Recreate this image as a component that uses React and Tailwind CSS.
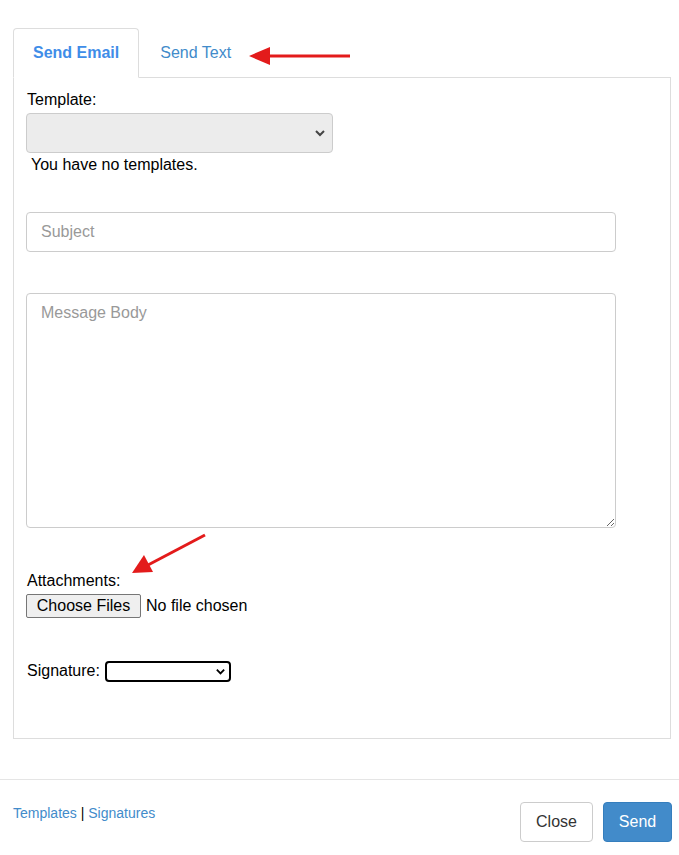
import React from "react";

const Chevron = ({ className }) => (
  <svg viewBox="0 0 12 12" className={className} fill="none" stroke="currentColor" strokeWidth="2">
    <path d="M2 4l4 4 4-4" />
  </svg>
);

const Arrows = () => (
  <svg className="absolute inset-0 pointer-events-none" width="679" height="855">
    <line x1="350" y1="56" x2="266" y2="56" stroke="#e31b1b" strokeWidth="3" />
    <polygon points="249,56 270,47 270,65" fill="#e31b1b" />
    <line x1="205" y1="535" x2="148" y2="565" stroke="#e31b1b" strokeWidth="3" />
    <polygon points="132,573 144,555 153,572" fill="#e31b1b" />
  </svg>
);

const App = () => {
  return (
    <div className="relative w-[679px] h-[855px] bg-white font-['Liberation_Sans',Arial,sans-serif] text-[16px] text-black">
      <Arrows />
      <div className="pl-[13px] pr-[8px] pt-[28px]">
        <div className="flex h-[49px]">
          <div className="relative z-10 -mb-px flex items-center px-[19px] border border-[#ddd] border-b-white rounded-t-[4px] bg-white font-bold text-[#3f8de8]">
            Send Email
          </div>
          <div className="flex items-center px-[21px] text-[#428bca]">Send Text</div>
        </div>
        <div className="border border-[#ddd] h-[662px] px-[12px] pt-[13px]">
          <div className="leading-[18px] pl-[1px]">Template:</div>
          <div className="mt-[4px] w-[307px] h-[40px] rounded-[4px] border border-[#ccc] bg-[#ececec] flex items-center justify-end pr-[6px] text-[#444]">
            <Chevron className="w-[12px] h-[12px]" />
          </div>
          <div className="leading-[18px] mt-[3px] pl-[5px]">You have no templates.</div>
          <input
            placeholder="Subject"
            className="block mt-[38px] w-[590px] h-[40px] rounded-[4px] border border-[#ccc] px-[14px] placeholder:text-[#999] outline-none"
          />
          <textarea
            placeholder="Message Body"
            className="block mt-[41px] w-[590px] h-[235px] rounded-[4px] border border-[#ccc] px-[14px] py-[7px] placeholder:text-[#999] outline-none resize"
          />
          <div className="leading-[18px] mt-[44px] pl-[1px]">Attachments:</div>
          <div className="flex items-center mt-[4px]">
            <button className="h-[24px] w-[115px] border border-[#767676] rounded-[2px] bg-[#efefef] leading-none">
              Choose Files
            </button>
            <span className="ml-[5px]">No file chosen</span>
          </div>
          <div className="flex items-center mt-[41px] pl-[1px]">
            <span>Signature:</span>
            <div className="ml-[5px] w-[126px] h-[21px] border-2 border-black rounded-[4px] flex items-center justify-end pr-[3px]">
              <Chevron className="w-[11px] h-[11px]" />
            </div>
          </div>
        </div>
      </div>
      <div className="mt-[40px] border-t border-[#e5e5e5] pl-[13px] pr-[7px] pt-[22px] flex justify-between">
        <div className="text-[14px] leading-[16px] mt-[3px]">
          <span className="text-[#428bca]">Templates</span> | <span className="text-[#428bca]">Signatures</span>
        </div>
        <div className="flex gap-[10px]">
          <button className="h-[40px] w-[73px] rounded-[4px] border border-[#ccc] bg-white text-[#333]">Close</button>
          <button className="h-[40px] w-[69px] rounded-[4px] border border-[#357ebd] bg-[#428bca] text-white">Send</button>
        </div>
      </div>
    </div>
  );
};

export default App;
